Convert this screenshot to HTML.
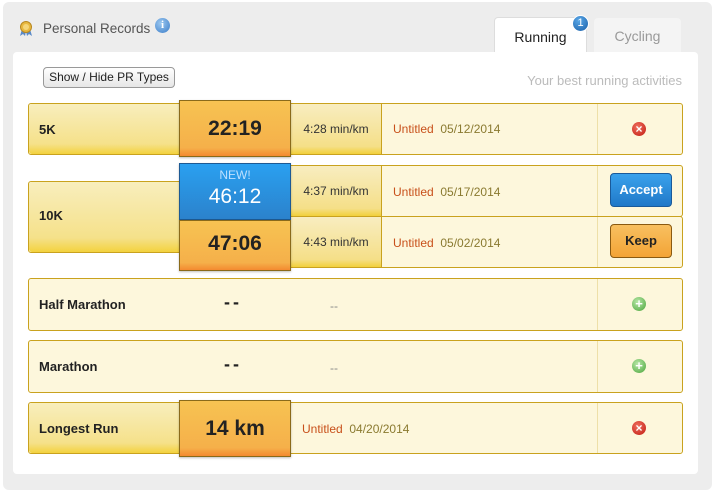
<!DOCTYPE html>
<html><head><meta charset="utf-8"><style>
*{box-sizing:border-box;margin:0;padding:0}
body{width:715px;height:493px;background:#fff;font-family:"Liberation Sans",sans-serif;position:relative;overflow:hidden}
.abs{position:absolute}
.outer{left:3px;top:2px;width:709px;height:488px;background:#ededed;border-radius:6px}
.inner{left:13px;top:52px;width:685px;height:422px;background:#fff;border-radius:4px}
.row{position:absolute;left:28px;width:655px;border:1px solid #c9a21e;border-radius:3px;background:#fdf7dc}
.lab{position:absolute;left:0;top:0;bottom:0;width:151px;background:linear-gradient(#f8eebd,#f5e18a 80%,#f3d23e);border-radius:3px 0 0 3px}
.lt{position:absolute;left:10px;font-size:13px;font-weight:bold;color:#222}
.pace{position:absolute;width:91px;background:linear-gradient(#f8edc0,#f5df88 85%,#f2d03a);border-right:1px solid #c9a21e;font-size:12px;color:#333;text-align:center}
.tbox{position:absolute;left:179px;width:112px;border:1px solid #8a6a1a;text-align:center;font-weight:bold;color:#222;font-size:21px;box-shadow:0 1px 2px rgba(0,0,0,.25)}
.or{background:linear-gradient(#f7c352,#f5b04a 85%,#f48a30)}
.bl{background:linear-gradient(#2aa0f0,#2b82cc);border-color:#1d5a94;color:#fff}
.act{position:absolute;font-size:12px}
.u{color:#c8501a}.d{color:#8a7a30}
.div{position:absolute;left:568px;top:0;bottom:0;border-left:1px solid #eee0a8}
.x{position:absolute;width:14px;height:14px;border-radius:50%;background:radial-gradient(circle at 40% 35%,#f07060,#c01a10);color:#fff;font-size:12px;line-height:14px;text-align:center;font-weight:bold}
.p{position:absolute;width:14px;height:14px;border-radius:50%;background:radial-gradient(circle at 40% 35%,#b8e8a8,#4aa43a);color:#fff;font-size:13px;line-height:14px;text-align:center;font-weight:bold}
.dash{position:absolute;font-size:18px;font-weight:bold;color:#222;letter-spacing:3px}
.sd{position:absolute;font-size:12px;color:#888}
</style></head><body>
<div class="abs outer"></div>
<div class="abs" style="left:494px;top:17px;width:93px;height:37px;background:#fff;border:1px solid #ddd;border-bottom:none;border-radius:4px 4px 0 0;text-align:center;font-size:14px;line-height:38px;color:#222">Running</div>
<div class="abs" style="left:594px;top:18px;width:87px;height:34px;background:#f4f4f4;border-radius:4px 4px 0 0;text-align:center;font-size:14px;line-height:36px;color:#999">Cycling</div>
<div class="abs" style="left:572px;top:15px;width:17px;height:17px;border-radius:50%;background:radial-gradient(circle at 40% 30%,#5aa8e8,#1a5fa8);border:1px solid #fff;color:#fff;font-size:11px;line-height:15px;text-align:center">1</div>
<div class="abs inner"></div>
<svg class="abs" style="left:18px;top:20px" width="16" height="17"><path d="M4 9 L2 16 L5 14 L7 16 L8 11 L9 16 L11 14 L14 16 L12 9Z" fill="#5a8ac8"/><circle cx="8" cy="7" r="5.5" fill="#e8b840" stroke="#b88820"/><circle cx="8" cy="7" r="3" fill="#f5d67a"/></svg>
<div class="abs" style="left:43px;top:21px;font-size:13.5px;color:#555">Personal Records</div>
<div class="abs" style="left:155px;top:18px;width:15px;height:15px;border-radius:50%;background:radial-gradient(circle at 40% 35%,#9cc8f0,#3a7cc8);color:#fff;font-size:11px;font-weight:bold;line-height:15px;text-align:center;font-family:'Liberation Serif',serif">i</div>
<div class="abs" style="left:43px;top:67px;width:132px;height:21px;border:1px solid #999;border-radius:4px;background:linear-gradient(#fff,#e6e6e6);font-size:12px;line-height:19px;text-align:center;color:#222">Show / Hide PR Types</div>
<div class="abs" style="right:33px;top:73px;font-size:13px;color:#bbb">Your best running activities</div>

<div class="row" style="top:103px;height:52px">
<div class="lab"></div><div class="lt" style="top:18px">5K</div>
<div class="pace" style="left:262px;top:0;height:50px;line-height:50px">4:28 min/km</div>
<div class="act" style="left:364px;top:18px"><span class="u">Untitled</span>&nbsp;&nbsp;<span class="d">05/12/2014</span></div>
<div class="div"></div><div class="x" style="left:603px;top:18px">×</div>
</div>
<div class="tbox or" style="top:100px;height:57px;line-height:55px">22:19</div>

<div class="row" style="top:181px;height:72px;width:160px"><div class="lab" style="width:160px"></div><div class="lt" style="top:26px">10K</div></div>
<div class="row" style="top:165px;height:52px;left:280px;width:403px;border-radius:0 3px 3px 0">
<div class="pace" style="left:10px;top:0;height:50px;line-height:50px">4:37 min/km</div>
<div class="act" style="left:112px;top:19px"><span class="u">Untitled</span>&nbsp;&nbsp;<span class="d">05/17/2014</span></div>
<div class="div" style="left:316px"></div>
<div class="abs" style="left:329px;top:7px;width:62px;height:34px;border:1px solid #1a5a9a;border-radius:4px;background:linear-gradient(#3aa2ec,#2078c8);color:#fff;font-size:13px;font-weight:bold;line-height:32px;text-align:center">Accept</div>
</div>
<div class="row" style="top:216px;height:52px;left:280px;width:403px;border-radius:0 3px 3px 0">
<div class="pace" style="left:10px;top:0;height:50px;line-height:50px">4:43 min/km</div>
<div class="act" style="left:112px;top:19px"><span class="u">Untitled</span>&nbsp;&nbsp;<span class="d">05/02/2014</span></div>
<div class="div" style="left:316px"></div>
<div class="abs" style="left:329px;top:7px;width:62px;height:34px;border:1px solid #8a5a10;border-radius:4px;background:linear-gradient(#f8c060,#f3a436);color:#222;font-size:13px;font-weight:bold;line-height:32px;text-align:center">Keep</div>
</div>
<div class="tbox bl" style="top:163px;height:57px;font-size:21px;font-weight:normal"><div style="font-size:12px;color:#bde0ff;line-height:14px;margin-top:4px">NEW!</div><div style="line-height:30px">46:12</div></div>
<div class="tbox or" style="top:220px;height:51px;line-height:46px">47:06</div>

<div class="row" style="top:278px;height:53px">
<div class="lt" style="top:18px">Half Marathon</div>
<div class="dash" style="left:195px;top:13px">--</div><div class="sd" style="left:301px;top:20px">--</div>
<div class="div"></div><div class="p" style="left:603px;top:18px">+</div>
</div>
<div class="row" style="top:340px;height:53px">
<div class="lt" style="top:18px">Marathon</div>
<div class="dash" style="left:195px;top:13px">--</div><div class="sd" style="left:301px;top:20px">--</div>
<div class="div"></div><div class="p" style="left:603px;top:18px">+</div>
</div>
<div class="row" style="top:402px;height:52px">
<div class="lab"></div><div class="lt" style="top:18px">Longest Run</div>
<div class="act" style="left:273px;top:19px"><span class="u">Untitled</span>&nbsp;&nbsp;<span class="d">04/20/2014</span></div>
<div class="div"></div><div class="x" style="left:603px;top:18px">×</div>
</div>
<div class="tbox or" style="top:400px;height:57px;line-height:55px">14 km</div>
</body></html>
